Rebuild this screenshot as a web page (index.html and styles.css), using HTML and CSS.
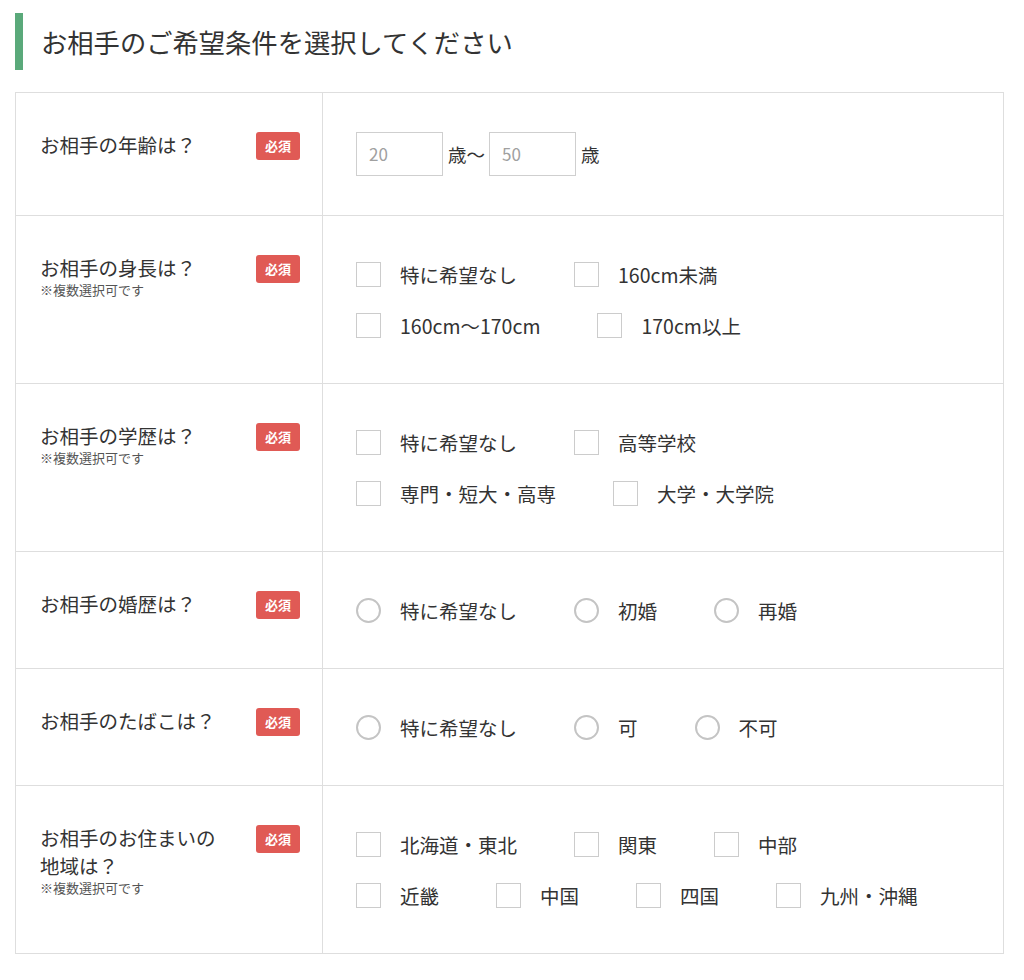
FILE: index.html
```html
<!DOCTYPE html>
<html lang="ja">
<head>
<meta charset="utf-8">
<link rel="stylesheet" href="styles.css">
</head>
<body>
<div class="page">
  <h2 class="title">お相手のご希望条件を選択してください</h2>
  <div class="form">
    <div class="row">
      <div class="head">
        <div class="qtext"><p class="q">お相手の年齢は？</p></div>
        <span class="req">必須</span>
      </div>
      <div class="body body-age">
        <div class="age">
          <span class="inp">20</span><span class="unit">歳〜</span><span class="inp">50</span><span class="unit">歳</span>
        </div>
      </div>
    </div>
    <div class="row">
      <div class="head">
        <div class="qtext"><p class="q">お相手の身長は？</p><p class="note">※複数選択可です</p></div>
        <span class="req">必須</span>
      </div>
      <div class="body">
        <div class="line">
          <label class="opt"><span class="box"></span>特に希望なし</label>
          <label class="opt"><span class="box"></span>160cm未満</label>
        </div>
        <div class="line">
          <label class="opt"><span class="box"></span>160cm〜170cm</label>
          <label class="opt"><span class="box"></span>170cm以上</label>
        </div>
      </div>
    </div>
    <div class="row">
      <div class="head">
        <div class="qtext"><p class="q">お相手の学歴は？</p><p class="note">※複数選択可です</p></div>
        <span class="req">必須</span>
      </div>
      <div class="body">
        <div class="line">
          <label class="opt"><span class="box"></span>特に希望なし</label>
          <label class="opt"><span class="box"></span>高等学校</label>
        </div>
        <div class="line">
          <label class="opt"><span class="box"></span>専門・短大・高専</label>
          <label class="opt"><span class="box"></span>大学・大学院</label>
        </div>
      </div>
    </div>
    <div class="row">
      <div class="head">
        <div class="qtext"><p class="q">お相手の婚歴は？</p></div>
        <span class="req">必須</span>
      </div>
      <div class="body">
        <div class="line">
          <label class="opt"><span class="radio"></span>特に希望なし</label>
          <label class="opt"><span class="radio"></span>初婚</label>
          <label class="opt"><span class="radio"></span>再婚</label>
        </div>
      </div>
    </div>
    <div class="row">
      <div class="head">
        <div class="qtext"><p class="q">お相手のたばこは？</p></div>
        <span class="req">必須</span>
      </div>
      <div class="body">
        <div class="line">
          <label class="opt"><span class="radio"></span>特に希望なし</label>
          <label class="opt"><span class="radio"></span>可</label>
          <label class="opt"><span class="radio"></span>不可</label>
        </div>
      </div>
    </div>
    <div class="row">
      <div class="head">
        <div class="qtext"><p class="q">お相手のお住まいの<br>地域は？</p><p class="note">※複数選択可です</p></div>
        <span class="req">必須</span>
      </div>
      <div class="body">
        <div class="line">
          <label class="opt"><span class="box"></span>北海道・東北</label>
          <label class="opt"><span class="box"></span>関東</label>
          <label class="opt"><span class="box"></span>中部</label>
        </div>
        <div class="line">
          <label class="opt"><span class="box"></span>近畿</label>
          <label class="opt"><span class="box"></span>中国</label>
          <label class="opt"><span class="box"></span>四国</label>
          <label class="opt"><span class="box"></span>九州・沖縄</label>
        </div>
      </div>
    </div>
  </div>
</div>
</body>
</html>
```

FILE: styles.css
```css
* { box-sizing: border-box; }
html, body { margin: 0; padding: 0; background: #fff; }
body {
  font-family: "Noto Sans CJK JP", "Noto Sans", sans-serif;
  color: #333;
}
.page { padding: 13px 0 0 15px; }
.title {
  margin: 0;
  height: 57px;
  border-left: 8px solid #5aa97a;
  padding-left: 18px;
  font-size: 26.3px;
  font-weight: 400;
  line-height: 57px;
  color: #333;
}
.form {
  margin-top: 22px;
  width: 989px;
  border: 1px solid #dedede;
  border-bottom: none;
}
.row {
  display: flex;
  border-bottom: 1px solid #dedede;
}
.head {
  width: 307px;
  flex: none;
  border-right: 1px solid #dedede;
  padding: 38px 22px 20px 24px;
  display: flex;
  justify-content: space-between;
  align-items: flex-start;
}
.q {
  margin: 0;
  font-size: 19.5px;
  line-height: 28px;
}
.note {
  margin: 0;
  font-size: 13px;
  line-height: 16px;
  color: #555;
}
.req {
  flex: none;
  width: 44px;
  height: 28px;
  margin-top: 1px;
  background: #e05a55;
  color: #fff;
  border-radius: 3px;
  font-size: 13px;
  font-weight: 700;
  line-height: 28px;
  text-align: center;
}
.body {
  flex: 1;
  padding: 40px 20px 39px 33px;
  display: flex;
  flex-direction: column;
  gap: 14px;
}
.body-age {
  padding-top: 39px;
  padding-bottom: 39px;
}
.age {
  display: flex;
  align-items: center;
  height: 44px;
}
.inp {
  width: 87px;
  height: 44px;
  border: 1px solid #cfcfcf;
  padding-left: 12px;
  font-size: 17px;
  line-height: 42px;
  color: #a0a0a0;
}
.unit {
  font-size: 18.5px;
  padding: 0 4px 0 5px;
}
.line {
  display: flex;
  height: 37px;
  align-items: center;
  column-gap: 57px;
}
.opt {
  display: inline-flex;
  align-items: center;
  gap: 19px;
  font-size: 19.5px;
  line-height: 37px;
  white-space: nowrap;
}
.box {
  width: 25px;
  height: 25px;
  border: 1px solid #cccccc;
  background: #fff;
  flex: none;
}
.radio {
  width: 25px;
  height: 25px;
  border: 2px solid #c4c4c4;
  border-radius: 50%;
  background: #fff;
  flex: none;
}
```
